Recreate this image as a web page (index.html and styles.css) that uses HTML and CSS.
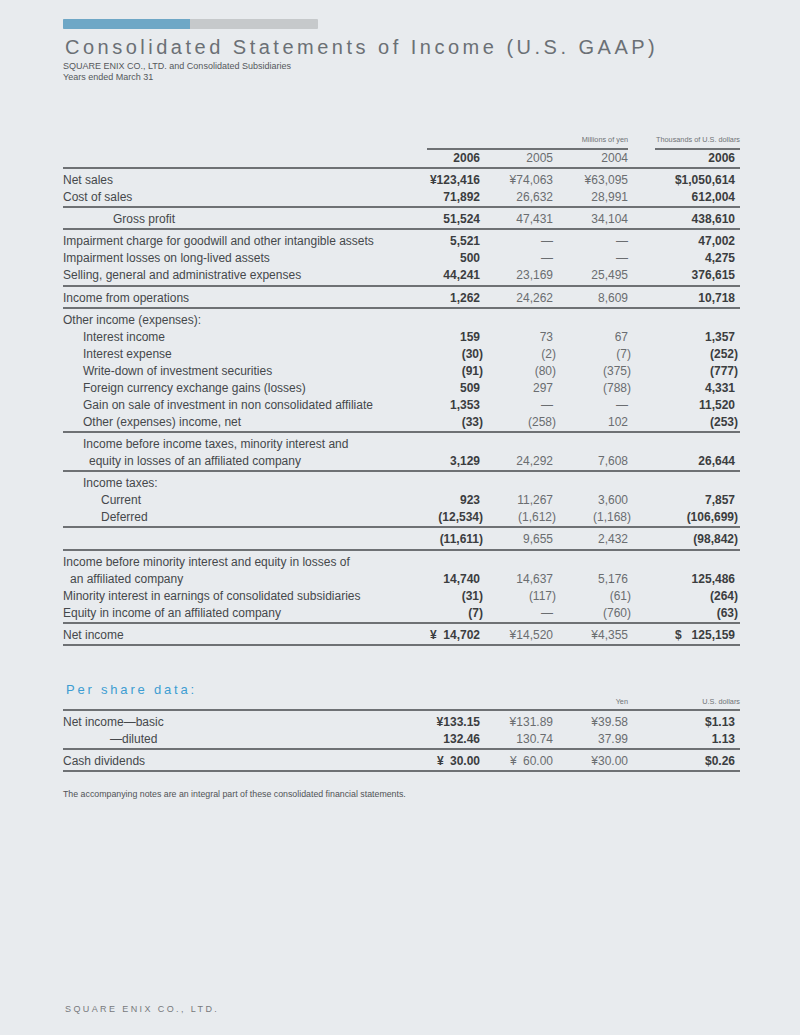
FILE: index.html
```html
<!DOCTYPE html>
<html lang="en">
<head>
<meta charset="utf-8">
<title>Consolidated Statements of Income (U.S. GAAP)</title>
<link rel="stylesheet" href="styles.css">
</head>
<body>
<div class="page">
  <div class="bar"><div class="bar-fill"></div></div>
  <h1 class="title">Consolidated Statements of Income (U.S. GAAP)</h1>
  <p class="sub">SQUARE ENIX CO., LTD. and Consolidated Subsidiaries<br>Years ended March 31</p>

  <div class="stmt">
    <div class="units">
      <div class="unit unit-yen">Millions of yen</div>
      <div class="unit unit-usd">Thousands of U.S. dollars</div>
    </div>
    <div class="row years">
      <div class="lbl"></div>
      <div class="v b">2006</div>
      <div class="v">2005</div>
      <div class="v">2004</div>
      <div class="v b">2006</div>
    </div>

    <div class="grp first">
      <div class="row"><div class="lbl">Net sales</div><div class="v b">¥123,416</div><div class="v">¥74,063</div><div class="v">¥63,095</div><div class="v b">$1,050,614</div></div>
      <div class="row"><div class="lbl">Cost of sales</div><div class="v b">71,892</div><div class="v">26,632</div><div class="v">28,991</div><div class="v b">612,004</div></div>
    </div>
    <div class="grp">
      <div class="row"><div class="lbl in50">Gross profit</div><div class="v b">51,524</div><div class="v">47,431</div><div class="v">34,104</div><div class="v b">438,610</div></div>
    </div>
    <div class="grp">
      <div class="row"><div class="lbl">Impairment charge for goodwill and other intangible assets</div><div class="v b">5,521</div><div class="v">—</div><div class="v">—</div><div class="v b">47,002</div></div>
      <div class="row"><div class="lbl">Impairment losses on long-lived assets</div><div class="v b">500</div><div class="v">—</div><div class="v">—</div><div class="v b">4,275</div></div>
      <div class="row"><div class="lbl">Selling, general and administrative expenses</div><div class="v b">44,241</div><div class="v">23,169</div><div class="v">25,495</div><div class="v b">376,615</div></div>
    </div>
    <div class="grp">
      <div class="row"><div class="lbl">Income from operations</div><div class="v b">1,262</div><div class="v">24,262</div><div class="v">8,609</div><div class="v b">10,718</div></div>
    </div>
    <div class="grp">
      <div class="row"><div class="lbl">Other income (expenses):</div><div class="v"></div><div class="v"></div><div class="v"></div><div class="v"></div></div>
      <div class="row"><div class="lbl in20">Interest income</div><div class="v b">159</div><div class="v">73</div><div class="v">67</div><div class="v b">1,357</div></div>
      <div class="row"><div class="lbl in20">Interest expense</div><div class="v b"><span class="neg">(30)</span></div><div class="v"><span class="neg">(2)</span></div><div class="v"><span class="neg">(7)</span></div><div class="v b"><span class="neg">(252)</span></div></div>
      <div class="row"><div class="lbl in20">Write-down of investment securities</div><div class="v b"><span class="neg">(91)</span></div><div class="v"><span class="neg">(80)</span></div><div class="v"><span class="neg">(375)</span></div><div class="v b"><span class="neg">(777)</span></div></div>
      <div class="row"><div class="lbl in20">Foreign currency exchange gains (losses)</div><div class="v b">509</div><div class="v">297</div><div class="v"><span class="neg">(788)</span></div><div class="v b">4,331</div></div>
      <div class="row"><div class="lbl in20">Gain on sale of investment in non consolidated affiliate</div><div class="v b">1,353</div><div class="v">—</div><div class="v">—</div><div class="v b">11,520</div></div>
      <div class="row"><div class="lbl in20">Other (expenses) income, net</div><div class="v b"><span class="neg">(33)</span></div><div class="v"><span class="neg">(258)</span></div><div class="v">102</div><div class="v b"><span class="neg">(253)</span></div></div>
    </div>
    <div class="grp">
      <div class="row"><div class="lbl in20">Income before income taxes, minority interest and</div><div class="v"></div><div class="v"></div><div class="v"></div><div class="v"></div></div>
      <div class="row"><div class="lbl in26">equity in losses of an affiliated company</div><div class="v b">3,129</div><div class="v">24,292</div><div class="v">7,608</div><div class="v b">26,644</div></div>
    </div>
    <div class="grp">
      <div class="row"><div class="lbl in20">Income taxes:</div><div class="v"></div><div class="v"></div><div class="v"></div><div class="v"></div></div>
      <div class="row"><div class="lbl in38">Current</div><div class="v b">923</div><div class="v">11,267</div><div class="v">3,600</div><div class="v b">7,857</div></div>
      <div class="row"><div class="lbl in38">Deferred</div><div class="v b"><span class="neg">(12,534)</span></div><div class="v"><span class="neg">(1,612)</span></div><div class="v"><span class="neg">(1,168)</span></div><div class="v b"><span class="neg">(106,699)</span></div></div>
    </div>
    <div class="grp">
      <div class="row"><div class="lbl"></div><div class="v b"><span class="neg">(11,611)</span></div><div class="v">9,655</div><div class="v">2,432</div><div class="v b"><span class="neg">(98,842)</span></div></div>
    </div>
    <div class="grp">
      <div class="row"><div class="lbl">Income before minority interest and equity in losses of</div><div class="v"></div><div class="v"></div><div class="v"></div><div class="v"></div></div>
      <div class="row"><div class="lbl in7">an affiliated company</div><div class="v b">14,740</div><div class="v">14,637</div><div class="v">5,176</div><div class="v b">125,486</div></div>
      <div class="row"><div class="lbl">Minority interest in earnings of consolidated subsidiaries</div><div class="v b"><span class="neg">(31)</span></div><div class="v"><span class="neg">(117)</span></div><div class="v"><span class="neg">(61)</span></div><div class="v b"><span class="neg">(264)</span></div></div>
      <div class="row"><div class="lbl">Equity in income of an affiliated company</div><div class="v b"><span class="neg">(7)</span></div><div class="v">—</div><div class="v"><span class="neg">(760)</span></div><div class="v b"><span class="neg">(63)</span></div></div>
    </div>
    <div class="grp last">
      <div class="row"><div class="lbl">Net income</div><div class="v b"><span class="split w-c1"><span>¥</span><span>14,702</span></span></div><div class="v">¥14,520</div><div class="v">¥4,355</div><div class="v b"><span class="split w-c4"><span>$</span><span>125,159</span></span></div></div>
    </div>
  </div>

  <h2 class="ps-title">Per share data:</h2>
  <div class="stmt ps">
    <div class="units ps-units">
      <div class="unit unit-yen-ps">Yen</div>
      <div class="unit unit-usd-ps">U.S. dollars</div>
    </div>
    <div class="pgrp first">
      <div class="row"><div class="lbl">Net income—basic</div><div class="v b">¥133.15</div><div class="v">¥131.89</div><div class="v">¥39.58</div><div class="v b">$1.13</div></div>
      <div class="row"><div class="lbl in47">—diluted</div><div class="v b">132.46</div><div class="v">130.74</div><div class="v">37.99</div><div class="v b">1.13</div></div>
    </div>
    <div class="pgrp last">
      <div class="row"><div class="lbl">Cash dividends</div><div class="v b"><span class="split w-p1"><span>¥</span><span>30.00</span></span></div><div class="v"><span class="split w-p2"><span>¥</span><span>60.00</span></span></div><div class="v">¥30.00</div><div class="v b">$0.26</div></div>
    </div>
  </div>

  <p class="note">The accompanying notes are an integral part of these consolidated financial statements.</p>

  <footer class="foot">SQUARE ENIX CO., LTD.</footer>
</div>
</body>
</html>
```

FILE: styles.css
```css
* { box-sizing: border-box; }
html, body { margin: 0; padding: 0; background: #e8ebee; }
body { font-family: "Liberation Sans", Arial, sans-serif; color: #45484b; }

.page {
  width: 800px;
  height: 1035px;
  padding: 19px 60px 0 63px;
  display: flex;
  flex-direction: column;
}

.bar {
  width: 255px;
  height: 10px;
  background: #c6c9cb;
  border-radius: 1px;
}
.bar-fill {
  width: 127px;
  height: 10px;
  background: #6ea7c6;
  border-radius: 1px 0 0 1px;
}

.title {
  margin: 6px 0 0 2px;
  font-weight: normal;
  font-size: 20px;
  line-height: 24px;
  letter-spacing: 3.5px;
  color: #6b7075;
}
.sub {
  margin: 1.5px 0 0;
  font-size: 9px;
  line-height: 11px;
  color: #55585b;
}

.stmt { width: 677px; }

.units {
  margin-top: 52.5px;
  display: flex;
  align-items: flex-end;
}
.unit {
  font-size: 7.3px;
  line-height: 10px;
  color: #707376;
  text-align: right;
  white-space: nowrap;
}
.unit-yen {
  margin-left: 364px;
  width: 201px;
  padding-bottom: 3px;
  border-bottom: 2px solid #6e7174;
}
.unit-usd {
  margin-left: 27px;
  width: 85px;
  padding-bottom: 3px;
  border-bottom: 2px solid #6e7174;
}

.row {
  display: grid;
  grid-template-columns: 364px 57px 73px 75px 108px;
  height: 17px;
  font-size: 12px;
  line-height: 17px;
}
.years { border-bottom: 2px solid #6e7174; height: 19px; }

.lbl { white-space: nowrap; color: #45484b; }
.in7 { padding-left: 7px; }
.in20 { padding-left: 20px; }
.in26 { padding-left: 26px; }
.in38 { padding-left: 38px; }
.in47 { padding-left: 47px; }
.in50 { padding-left: 50px; }

.v {
  text-align: right;
  padding-right: 4px;
  color: #6a6d70;
  white-space: nowrap;
}
.v:last-child { padding-right: 5px; }
.v.b { font-weight: bold; color: #3b3d40; }

.neg { margin-right: -3px; }

.split {
  display: inline-flex;
  justify-content: space-between;
}
.w-c1 { width: 50px; }
.w-c4 { width: 60px; }
.w-p1 { width: 43px; }
.w-p2 { width: 43px; }

.grp {
  padding-top: 3px;
  padding-bottom: 0.2px;
  border-top: 2px solid #6e7174;
}
.grp.first { border-top: 0; padding-top: 3px; }
.grp.last { border-bottom: 2px solid #6e7174; }

.ps-title {
  margin: 37px 0 0 3px;
  font-weight: normal;
  font-size: 13px;
  line-height: 14px;
  letter-spacing: 2.8px;
  color: #3d9dd2;
}
.ps-units {
  margin-top: 0;
  border-bottom: 2px solid #6e7174;
  padding-bottom: 2px;
}
.unit-yen-ps { margin-left: 364px; width: 201px; }
.unit-usd-ps { margin-left: 27px; width: 85px; }

.pgrp { padding-top: 3.5px; padding-bottom: 0; }
.pgrp.last { border-top: 2px solid #6e7174; border-bottom: 2px solid #6e7174; padding-top: 3px; }

.note {
  margin: 17px 0 0;
  font-size: 8.8px;
  line-height: 10px;
  color: #505356;
}

.foot {
  margin-top: auto;
  padding: 0 0 20px 2px;
  font-size: 9px;
  line-height: 12px;
  letter-spacing: 2.4px;
  color: #77797c;
}
```
